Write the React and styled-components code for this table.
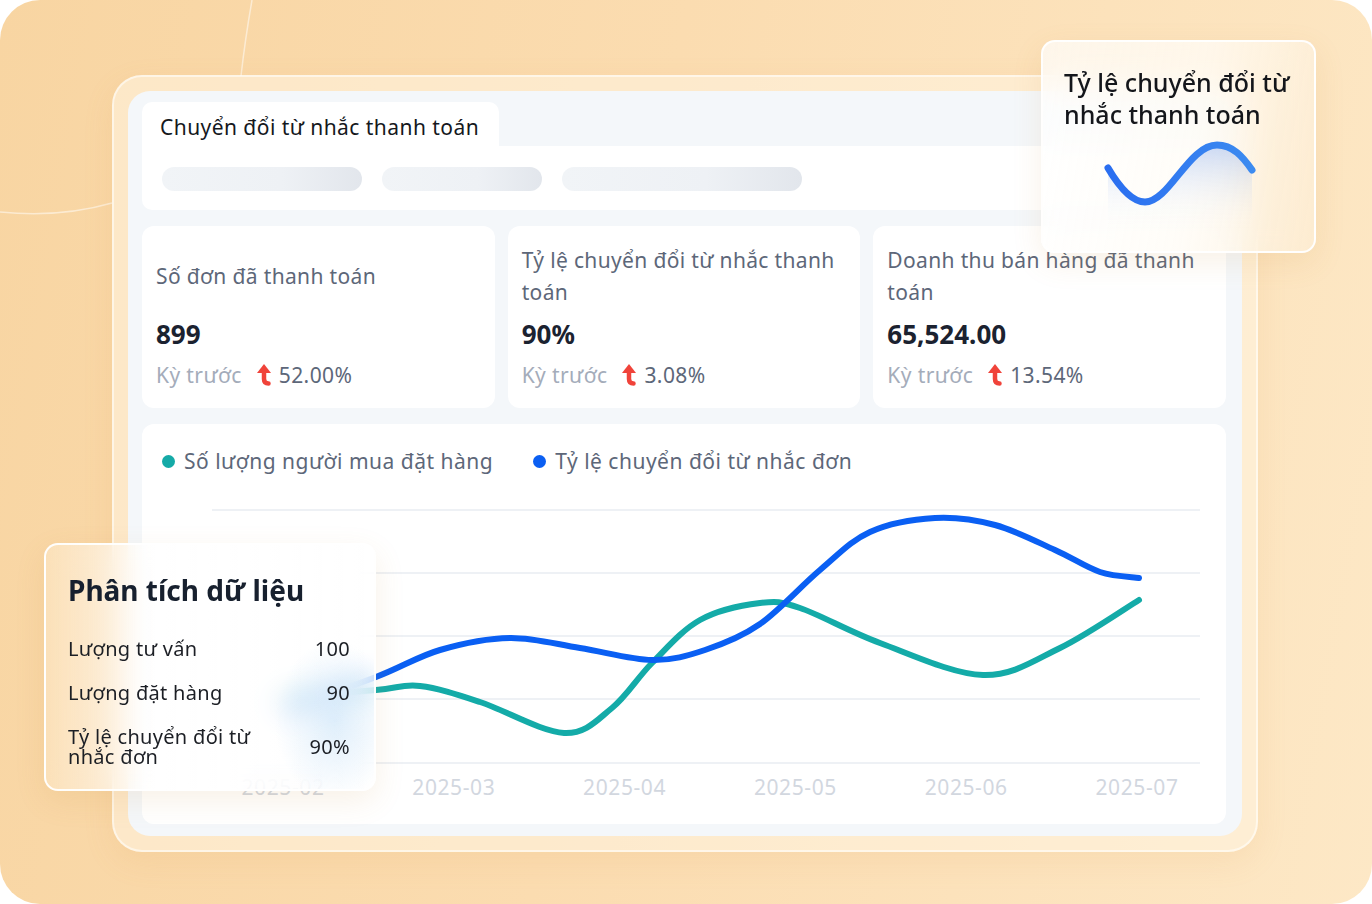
import React from "react";
import styled, { createGlobalStyle } from "styled-components";

const GlobalStyle = createGlobalStyle`
  html, body { margin: 0; padding: 0; background: #ffffff; }
  body { font-family: "Noto Sans", "Open Sans", sans-serif; }
  * { box-sizing: border-box; }
`;

// page + backdrop
const Page = styled.div`
  position: relative;
  width: 1372px;
  height: 904px;
  overflow: hidden;
`;

const Canvas = styled.div`
  position: relative;
  width: 100%;
  height: 100%;
  border-radius: 40px;
  background: linear-gradient(100deg, #f8d5a2 0%, #fbdcb0 45%, #fde8c6 100%);
  padding: 75px 114px 52px 112px;
  display: flex;
`;

const Decor = styled.svg`
  position: absolute;
  inset: 0;
  pointer-events: none;
`;

const Frame = styled.div`
  position: relative;
  flex: 1;
  border-radius: 30px;
  padding: 14px;
  background: rgba(255, 244, 224, 0.6);
  border: 2px solid rgba(255, 255, 255, 0.55);
  box-shadow: 0 10px 30px rgba(220, 160, 80, 0.12);
  display: flex;
`;

const Panel = styled.div`
  flex: 1;
  border-radius: 22px;
  background: #f4f7fa;
  padding: 11px 16px 12px 14px;
  display: flex;
  flex-direction: column;
`;

// header with tab
const Tab = styled.div`
  align-self: flex-start;
  height: 46px;
  padding: 5px 20px 0 18px;
  background: #ffffff;
  border-radius: 10px 10px 0 0;
  display: flex;
  align-items: center;
  font-size: 21px;
  letter-spacing: 0.45px;
  color: #15181d;
`;

const HeaderBody = styled.div`
  height: 64px;
  background: #ffffff;
  border-radius: 0 10px 10px 10px;
  padding: 21px 20px;
  display: flex;
  gap: 20px;
`;

const Pill = styled.div`
  width: ${(p) => p.w}px;
  height: 24px;
  border-radius: 12px;
  background: linear-gradient(90deg, #f1f4f7 0%, #eef1f5 60%, #e2e6ec 100%);
`;

// stat cards
const Cards = styled.div`
  margin-top: 16px;
  display: grid;
  grid-template-columns: repeat(3, 1fr);
  gap: 13px;
`;

const Card = styled.div`
  height: 182px;
  background: #ffffff;
  border-radius: 12px;
  padding: 18px 8px 0 14px;
  display: flex;
  flex-direction: column;
`;

const CardTitle = styled.div`
  min-height: 64px;
  display: flex;
  align-items: center;
  font-size: 21px;
  letter-spacing: 0.35px;
  line-height: 32px;
  color: #5d6779;
`;

const CardValue = styled.div`
  margin-top: 8px;
  font-size: 26px;
  line-height: 36px;
  font-weight: 700;
  color: #1b2230;
`;

const Delta = styled.div`
  margin-top: 8px;
  display: flex;
  align-items: center;
  font-size: 21px;
  letter-spacing: 0.4px;
  line-height: 30px;
  color: #5d6779;
`;

const DeltaLabel = styled.span`
  color: #a4acba;
  margin-right: 14px;
`;

const Arrow = styled.svg`
  margin-right: 7px;
`;

// chart
const ChartCard = styled.div`
  margin-top: 16px;
  flex: 1;
  background: #ffffff;
  border-radius: 12px;
  display: flex;
  flex-direction: column;
`;

const Legend = styled.div`
  height: 48px;
  padding: 26px 0 0 20px;
  display: flex;
  align-items: center;
  gap: 40px;
`;

const LegendItem = styled.div`
  display: flex;
  align-items: center;
  gap: 9px;
  font-size: 21px;
  letter-spacing: 0.5px;
  color: #5d6779;
`;

const Dot = styled.span`
  width: 13px;
  height: 13px;
  border-radius: 50%;
  background: ${(p) => p.color};
`;

const ChartSvg = styled.svg`
  display: block;
`;

// floating glass cards
const Glass = styled.div`
  position: absolute;
  border-radius: 14px;
  border: 2px solid rgba(255, 255, 255, 0.95);
  backdrop-filter: blur(14px);
  box-shadow: 0 10px 30px rgba(200, 140, 60, 0.12);
`;

const RateCard = styled(Glass)`
  left: 1041px;
  top: 40px;
  width: 275px;
  height: 213px;
  padding-top: 24px;
  background: linear-gradient(100deg, rgba(255, 255, 255, 0.7) 0%, rgba(255, 252, 246, 0.78) 55%, rgba(253, 238, 214, 0.72) 100%);
`;

const RateTitle = styled.div`
  padding-left: 21px;
  font-size: 25px;
  line-height: 32px;
  font-weight: 500;
  color: #14161b;
`;

const AnalysisCard = styled(Glass)`
  left: 44px;
  top: 543px;
  width: 332px;
  height: 248px;
  padding: 20px 24px 0 22px;
  background:
    radial-gradient(ellipse 60px 80px at 88% 72%, rgba(140, 195, 240, 0.28), rgba(140, 195, 240, 0) 100%),
    linear-gradient(90deg, rgba(253, 232, 200, 0.55) 0%, rgba(255, 255, 255, 0.72) 30%, rgba(255, 255, 255, 0.68) 100%);
`;

const AnalysisTitle = styled.div`
  font-size: 28px;
  line-height: 50px;
  font-weight: 700;
  color: #17202e;
  margin-bottom: 12px;
`;

const Row = styled.div`
  display: flex;
  justify-content: space-between;
  align-items: center;
  min-height: ${(p) => (p.tall ? 64 : 44)}px;
  font-size: 20px;
  letter-spacing: 0.3px;
  line-height: 20px;
  color: #1c1f25;
`;

const RowLabel = styled.span`
  max-width: 200px;
`;

const months = ["2025-02", "2025-03", "2025-04", "2025-05", "2025-06", "2025-07"];

const blue = [
  [283, 712], [376, 679], [440, 652], [510, 640], [580, 650], [652, 662],
  [705, 652], [760, 626], [820, 572], [870, 534], [935, 520], [995, 527],
  [1055, 552], [1100, 574], [1139, 580],
];

const teal = [
  [283, 700], [376, 692], [420, 688], [480, 704], [564, 735], [612, 710],
  [652, 665], [700, 622], [760, 605], [800, 610], [880, 645], [983, 677],
  [1060, 650], [1139, 602],
];

function smooth(pts) {
  let d = `M${pts[0][0]} ${pts[0][1]}`;
  for (let i = 0; i < pts.length - 1; i++) {
    const p0 = pts[i - 1] || pts[i];
    const p1 = pts[i];
    const p2 = pts[i + 1];
    const p3 = pts[i + 2] || p2;
    const c1x = p1[0] + (p2[0] - p0[0]) / 6;
    const c1y = p1[1] + (p2[1] - p0[1]) / 6;
    const c2x = p2[0] - (p3[0] - p1[0]) / 6;
    const c2y = p2[1] - (p3[1] - p1[1]) / 6;
    d += ` C${c1x} ${c1y} ${c2x} ${c2y} ${p2[0]} ${p2[1]}`;
  }
  return d;
}

function UpArrow() {
  return (
    <Arrow width="16" height="22" viewBox="0 0 16 22">
      <polygon points="8,0 1,9 15,9" fill="#f0433a" />
      <path d="M8 7 V15 Q8 19.5 12.5 19.5" stroke="#f0433a" strokeWidth="4.5" fill="none" strokeLinecap="round" />
    </Arrow>
  );
}

const stats = [
  { title: "Số đơn đã thanh toán", value: "899", delta: "52.00%" },
  { title: "Tỷ lệ chuyển đổi từ nhắc thanh toán", value: "90%", delta: "3.08%" },
  { title: "Doanh thu bán hàng đã thanh toán", value: "65,524.00", delta: "13.54%" },
];

export default function App() {
  const wave = "M65 128 C78 150 90 162 102 162 C126 162 146 105 174 105 C190 105 200 117 209 130";
  return (
    <>
      <GlobalStyle />
      <Page>
        <Canvas>
          <Decor width="1372" height="904">
            <path d="M252 0 Q245 40 241 76" stroke="rgba(255,255,255,0.5)" strokeWidth="1.5" fill="none" />
            <path d="M0 212 Q60 218 112 203" stroke="rgba(255,255,255,0.5)" strokeWidth="1.5" fill="none" />
          </Decor>
          <Frame>
            <Panel>
              <Tab>Chuyển đổi từ nhắc thanh toán</Tab>
              <HeaderBody>
                <Pill w={200} />
                <Pill w={160} />
                <Pill w={240} />
              </HeaderBody>

              <Cards>
                {stats.map((s) => (
                  <Card key={s.title}>
                    <CardTitle>{s.title}</CardTitle>
                    <CardValue>{s.value}</CardValue>
                    <Delta>
                      <DeltaLabel>Kỳ trước</DeltaLabel>
                      <UpArrow />
                      {s.delta}
                    </Delta>
                  </Card>
                ))}
              </Cards>

              <ChartCard>
                <Legend>
                  <LegendItem>
                    <Dot color="#15aaa7" />
                    Số lượng người mua đặt hàng
                  </LegendItem>
                  <LegendItem>
                    <Dot color="#0b5ff2" />
                    Tỷ lệ chuyển đổi từ nhắc đơn
                  </LegendItem>
                </Legend>
                <ChartSvg width="1084" height="352" viewBox="142 474 1084 352">
                  {[512, 575, 638, 701, 765].map((y) => (
                    <line key={y} x1="212" x2="1200" y1={y} y2={y} stroke="#eef1f5" strokeWidth="2" />
                  ))}
                  {months.map((m, i) => (
                    <text
                      key={m}
                      x={283 + i * 170.8}
                      y="797"
                      textAnchor="middle"
                      fontSize="21"
                      letterSpacing="0.6"
                      fill="#d2d7df"
                      fontFamily="Noto Sans, sans-serif"
                    >
                      {m}
                    </text>
                  ))}
                  <path d={smooth(teal)} stroke="#14aba8" strokeWidth="6" fill="none" strokeLinecap="round" />
                  <path d={smooth(blue)} stroke="#0a5ff3" strokeWidth="6" fill="none" strokeLinecap="round" />
                </ChartSvg>
              </ChartCard>
            </Panel>
          </Frame>

          <RateCard>
            <RateTitle>
              Tỷ lệ chuyển đổi từ
              <br />
              nhắc thanh toán
            </RateTitle>
            <svg width="271" height="120" viewBox="0 90 271 120" style={{ display: "block" }}>
              <defs>
                <linearGradient id="waveFill" x1="0" y1="0" x2="0" y2="1">
                  <stop offset="0" stopColor="#5b8ff0" stopOpacity="0.32" />
                  <stop offset="1" stopColor="#ffffff" stopOpacity="0" />
                </linearGradient>
                <linearGradient id="waveStroke" x1="0" y1="0" x2="1" y2="0">
                  <stop offset="0" stopColor="#2a6ef0" />
                  <stop offset="1" stopColor="#3c8bf0" />
                </linearGradient>
              </defs>
              <path d={`${wave} L209 190 L65 190 Z`} fill="url(#waveFill)" />
              <path d={wave} stroke="url(#waveStroke)" strokeWidth="7" fill="none" strokeLinecap="round" />
            </svg>
          </RateCard>

          <AnalysisCard>
            <AnalysisTitle>Phân tích dữ liệu</AnalysisTitle>
            <Row>
              <RowLabel>Lượng tư vấn</RowLabel>
              <span>100</span>
            </Row>
            <Row>
              <RowLabel>Lượng đặt hàng</RowLabel>
              <span>90</span>
            </Row>
            <Row tall>
              <RowLabel>Tỷ lệ chuyển đổi từ nhắc đơn</RowLabel>
              <span>90%</span>
            </Row>
          </AnalysisCard>
        </Canvas>
      </Page>
    </>
  );
}
